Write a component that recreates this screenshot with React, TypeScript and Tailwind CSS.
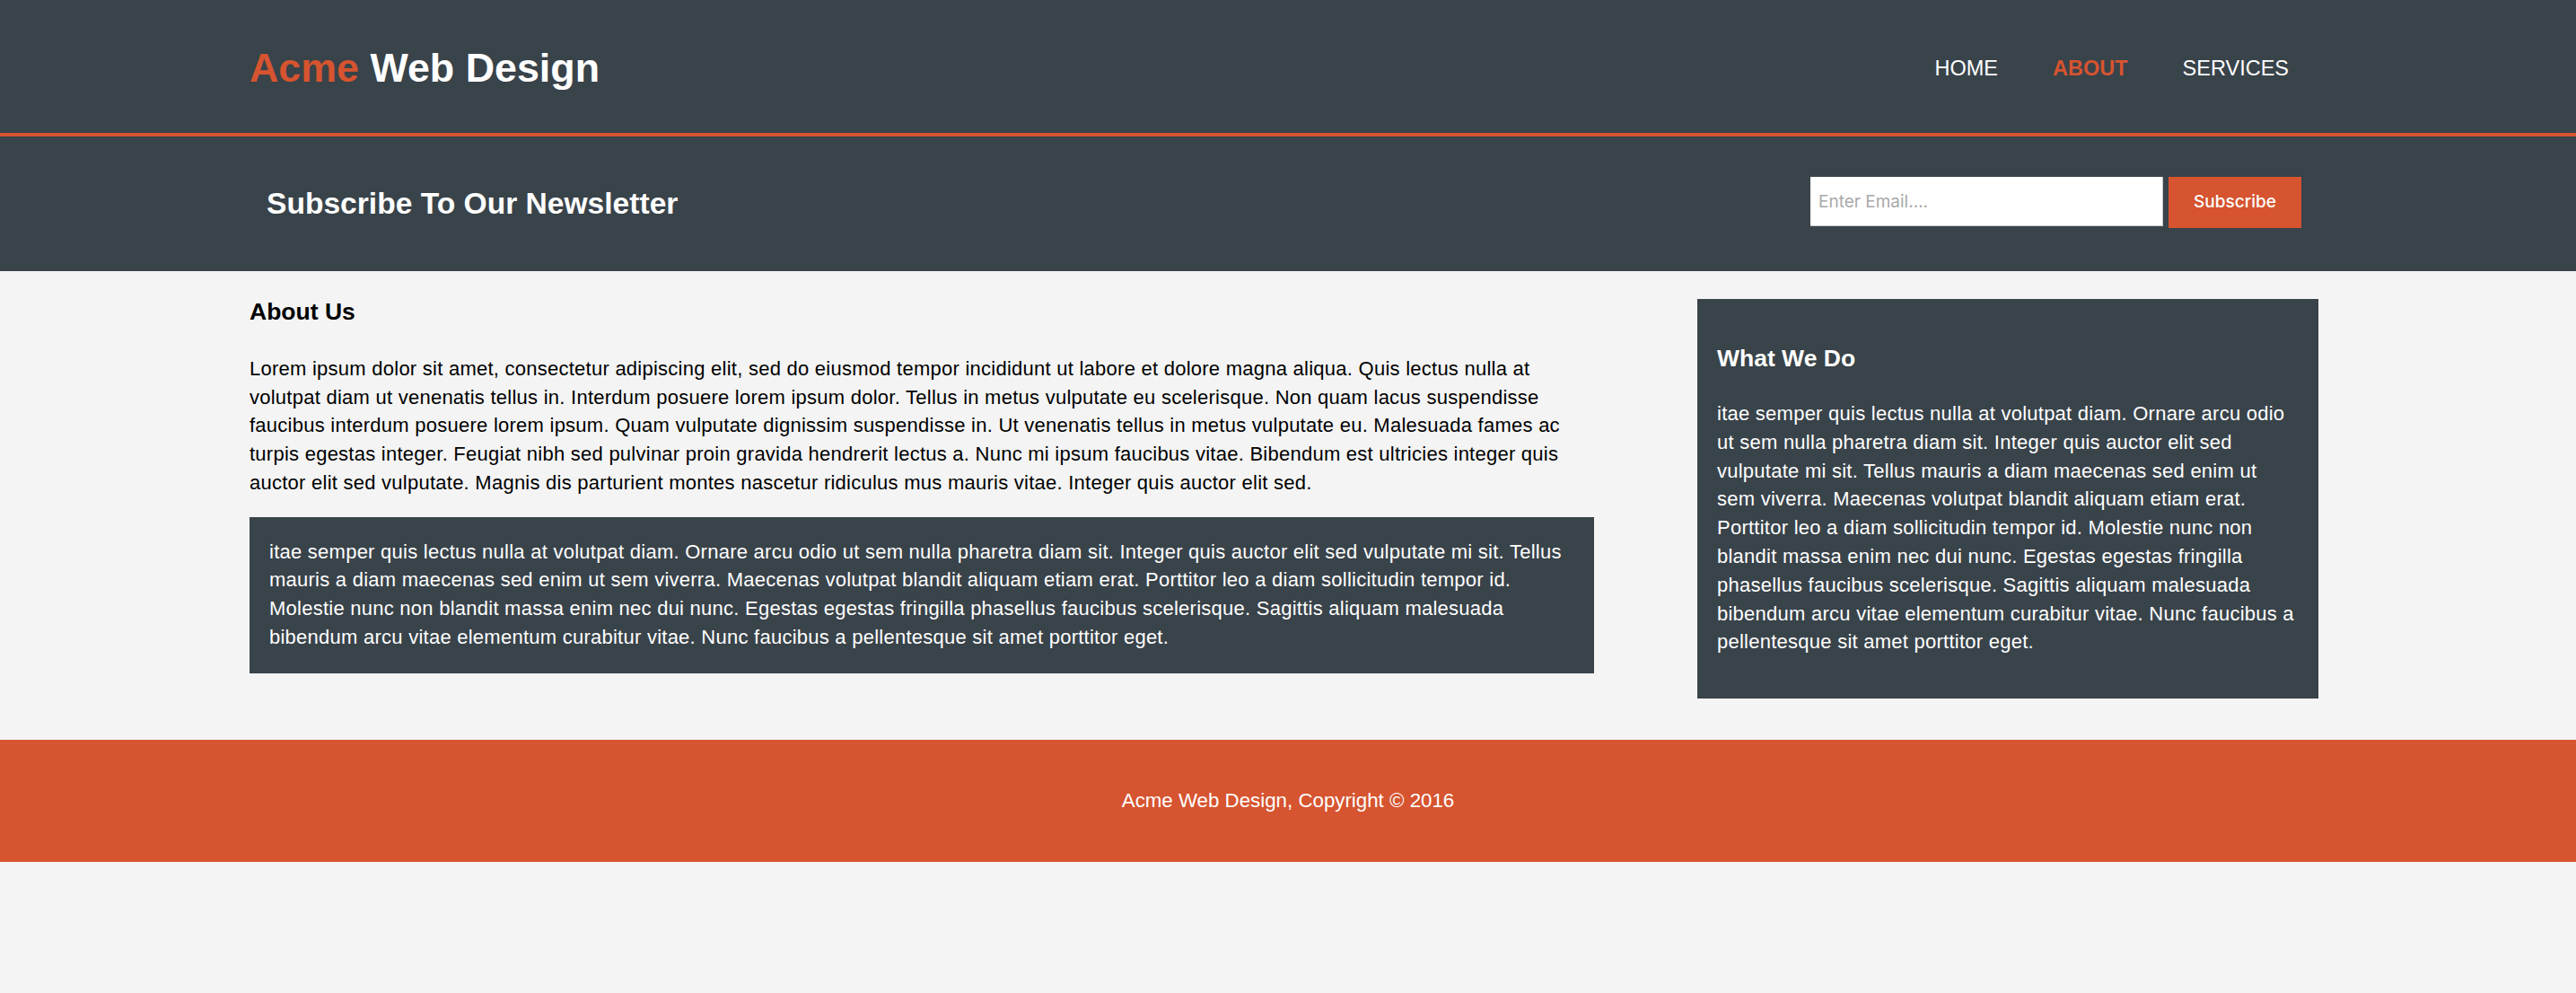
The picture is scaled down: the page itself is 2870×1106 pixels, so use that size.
const loremMain =
  'Lorem ipsum dolor sit amet, consectetur adipiscing elit, sed do eiusmod tempor incididunt ut labore et dolore magna aliqua. Quis lectus nulla at volutpat diam ut venenatis tellus in. Interdum posuere lorem ipsum dolor. Tellus in metus vulputate eu scelerisque. Non quam lacus suspendisse faucibus interdum posuere lorem ipsum. Quam vulputate dignissim suspendisse in. Ut venenatis tellus in metus vulputate eu. Malesuada fames ac turpis egestas integer. Feugiat nibh sed pulvinar proin gravida hendrerit lectus a. Nunc mi ipsum faucibus vitae. Bibendum est ultricies integer quis auctor elit sed vulputate. Magnis dis parturient montes nascetur ridiculus mus mauris vitae. Integer quis auctor elit sed.';

const loremDark =
  'itae semper quis lectus nulla at volutpat diam. Ornare arcu odio ut sem nulla pharetra diam sit. Integer quis auctor elit sed vulputate mi sit. Tellus mauris a diam maecenas sed enim ut sem viverra. Maecenas volutpat blandit aliquam etiam erat. Porttitor leo a diam sollicitudin tempor id. Molestie nunc non blandit massa enim nec dui nunc. Egestas egestas fringilla phasellus faucibus scelerisque. Sagittis aliquam malesuada bibendum arcu vitae elementum curabitur vitae. Nunc faucibus a pellentesque sit amet porttitor eget.';

const links = [
  { label: 'Home', current: false },
  { label: 'About', current: true },
  { label: 'Services', current: false },
];

export default function App() {
  return (
    <div className="min-h-screen bg-[#f4f4f4] text-black font-['Liberation_Sans',Arial,sans-serif]">
      {/* header */}
      <header className="h-[152px] bg-[#39434a] border-b-4 border-[#d6542f]">
        <div className="ml-[278px] w-[2305px] flex justify-between">
          <h1 className="pt-[42px] text-[44.8px] leading-[66px] font-bold text-white">
            <span className="text-[#d6542f]">Acme</span> Web Design
          </h1>
          <nav className="pt-[59px] pr-[33px]">
            <ul className="flex gap-[61px] text-[23.5px] leading-[35px] uppercase">
              {links.map((l) => (
                <li key={l.label}>
                  <a href="#" className={l.current ? 'text-[#d6542f] font-bold' : 'text-white'}>
                    {l.label}
                  </a>
                </li>
              ))}
            </ul>
          </nav>
        </div>
      </header>

      {/* newsletter */}
      <section className="h-[150px] bg-[#39434a] text-white">
        <div className="ml-[278px] w-[2305px] h-full flex items-center justify-between">
          <h1 className="ml-[19px] text-[33.6px] leading-[50px] font-bold">Subscribe To Our Newsletter</h1>
          <form className="self-start mt-[45px] flex items-start gap-[6px] pr-[19px]" onSubmit={(e) => e.preventDefault()}>
            <input
              type="email"
              placeholder="Enter Email...."
              className="w-[393px] h-[55px] bg-white px-[9px] text-[19px] text-black font-['Inter',sans-serif] border-b border-r border-[#c9c9c9] outline-none placeholder:text-[#a9a9a9]"
            />
            <button
              type="submit"
              className="w-[148px] h-[57px] bg-[#d6542f] text-white text-[19px] font-medium font-['Inter',sans-serif]"
            >
              Subscribe
            </button>
          </form>
        </div>
      </section>

      {/* main */}
      <div className="ml-[278px] w-[2305px] flex justify-between items-start">
        <article className="w-[1498px]">
          <h3 className="mt-[26px] text-[26.5px] leading-[39px] font-bold">About Us</h3>
          <p className="mt-[28px] text-[22px] leading-[31.7px] tracking-[0.25px]">{loremMain}</p>
          <div className="mt-[22px] bg-[#39434a] text-white px-[22px] pt-[23px] pb-[25px] text-[22px] leading-[31.7px] tracking-[0.25px]">
            <p>{loremDark}</p>
          </div>
        </article>

        <aside className="w-[692px] mt-[31px] bg-[#39434a] text-white px-[22px] pt-[47px] pb-[47px]">
          <h3 className="text-[26.5px] leading-[39px] font-bold">What We Do</h3>
          <p className="mt-[26px] text-[22px] leading-[31.8px] tracking-[0.25px]">{loremDark}</p>
        </aside>
      </div>

      <footer className="mt-[46px] h-[136px] bg-[#d6542f] text-white flex items-center justify-center text-[22.3px] leading-[31.6px]">
        <p>Acme Web Design, Copyright &copy; 2016</p>
      </footer>
    </div>
  );
}
